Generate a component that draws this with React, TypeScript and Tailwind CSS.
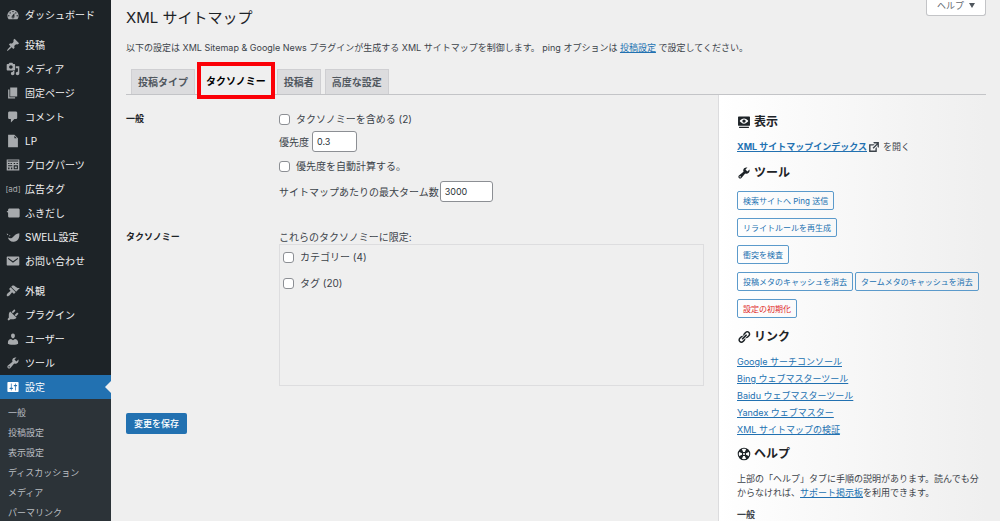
import type { ReactNode } from 'react';

const paths = {
  dashboard:
    'M3.76 16h12.48c1.1-1.37 1.76-3.11 1.76-5 0-4.42-3.58-8-8-8s-8 3.58-8 8c0 1.89.66 3.63 1.76 5zM10 4c.55 0 1 .45 1 1s-.45 1-1 1-1-.45-1-1 .45-1 1-1zM6 6c.55 0 1 .45 1 1s-.45 1-1 1-1-.45-1-1 .45-1 1-1zm8 0c.55 0 1 .45 1 1s-.45 1-1 1-1-.45-1-1 .45-1 1-1zm-5.37 5.55L12 7v6c0 1.1-.9 2-2 2s-2-.9-2-2c0-.57.24-1.08.63-1.45zM4 10c.55 0 1 .45 1 1s-.45 1-1 1-1-.45-1-1 .45-1 1-1zm12 0c.55 0 1 .45 1 1s-.45 1-1 1-1-.45-1-1 .45-1 1-1zm-5 3c0-.55-.45-1-1-1s-1 .45-1 1 .45 1 1 1 1-.45 1-1z',
  post: 'M10.44 3.02l1.82-1.82 6.36 6.35-1.83 1.82c-1.05-.68-2.48-.57-3.41.36l-.75.75c-.92.93-1.04 2.35-.35 3.41l-1.83 1.82-2.41-2.41-2.8 2.79c-.42.42-3.38 2.71-3.8 2.29s1.86-3.39 2.28-3.81l2.79-2.79L4.1 9.36l1.83-1.82c1.05.69 2.48.57 3.4-.36l.75-.75c.93-.92 1.05-2.35.36-3.41z',
  media:
    'M13 11V4c0-.55-.45-1-1-1h-1.67L9 1H5L3.67 3H2c-.55 0-1 .45-1 1v7c0 .55.45 1 1 1h10c.55 0 1-.45 1-1zM7 4.5c1.38 0 2.5 1.12 2.5 2.5S8.38 9.5 7 9.5 4.5 8.38 4.5 7 5.62 4.5 7 4.5zM14 6h5v10.5c0 1.38-1.12 2.5-2.5 2.5S14 17.88 14 16.5s1.12-2.5 2.5-2.5c.17 0 .34.02.5.05V9h-3V6zm-4 8.05V13h2v3.5c0 1.38-1.12 2.5-2.5 2.5S7 17.88 7 16.5 8.12 14 9.5 14c.17 0 .34.02.5.05z',
  page: 'M6 15V2h10v13H6zm-1 1h8v2H3V5h2v11z',
  comment:
    'M5 2h9c1.1 0 2 .9 2 2v7c0 1.1-.9 2-2 2h-2l-5 5v-5H5c-1.1 0-2-.9-2-2V4c0-1.1.9-2 2-2z',
  document: 'M3 1h9l5 5v13H3V1zm9 1.500V6h3.500z',
  blocks:
    'M1 2h18v16H1V2zm1.500 1.500v1.500h15V3.500h-15zM3 7v1.500h2V7H3zm3.500 0v1.500h2V7h-2zm4.500 0v1.500h2V7h-2zm4 0v1.500h2V7h-2zM3 10.500v1.300h6v-1.300H3zm8 0V16h6v-5.500h-6zm1.500 1.500h3v2.500h-3V12zM3 13.500V16h2v-2.500H3zm4 0V16h2v-2.500H7z',
  balloon:
    'M5 3.500h12.500c1.100 0 2 .9 2 2v9c0 1.100-.9 2-2 2H5c-1.100 0-2-.9-2-2V9.500L.8 7.800 3 6.800V5.500c0-1.100.9-2 2-2z',
  swell:
    'M19 4.500c.8 6.500-2.200 11.800-8 12.300-4.200.3-7.300-2-8.300-6 2.600 1.600 5.600 1.500 7.300-.8C12.500 7 14.500 5 19 4.500zM1 5l2.500 1.200L1.800 7.500zM4.500 7.200l2 1-1.500 1z',
  mail: 'M2 3.500h16c.6 0 1 .4 1 1v11c0 .6-.4 1-1 1H2c-.6 0-1-.4-1-1v-11c0-.6.4-1 1-1zm1 2v1.600l7 5.400 7-5.400V5.500l-7 5z',
  appearance:
    'M14.48 11.06L7.41 3.99l1.5-1.5c.5-.56 2.3-.47 3.51.32 1.21.8 1.43 1.28 2.91 2.1 1.18.64 2.45 1.26 4.45.85zm-.71.71L6.7 4.7 4.93 6.47c-.39.39-.39 1.02 0 1.41l1.06 1.06c.39.39.39 1.03 0 1.42-.6.6-1.43 1.11-2.21 1.69-.35.26-.7.53-1.01.84C1.43 14.23.4 16.08 1.4 17.07c.99 1 2.84-.03 4.18-1.36.31-.31.58-.66.85-1.02.57-.78 1.08-1.61 1.69-2.21.39-.39 1.02-.39 1.41 0l1.06 1.06c.39.39 1.02.39 1.41 0z',
  plugin:
    'M13.11 4.36L9.87 7.6 8 5.73l3.24-3.24c.35-.34 1.05-.2 1.56.32.52.51.66 1.21.31 1.55zm-8 1.77l.91-1.12 9.01 9.01-1.19.84c-.71.71-2.63 1.16-3.82 1.16H6.14L4.9 17.26c-.59.59-1.54.59-2.12 0-.59-.58-.59-1.53 0-2.12l1.24-1.24v-3.88c0-1.13.4-3.19 1.09-3.89zm7.26 3.97l3.24-3.24c.34-.35 1.04-.21 1.55.31.52.51.66 1.21.31 1.55l-3.24 3.25z',
  user: 'M10 9.25c-2.27 0-2.73-3.44-2.73-3.44C7 4.02 7.82 2 9.97 2c2.16 0 2.98 2.02 2.71 3.81 0 0-.41 3.44-2.68 3.44zm0 2.57L12.72 10c2.39 0 4.52 2.33 4.52 4.53v2.49s-3.65 1.13-7.24 1.13c-3.65 0-7.24-1.13-7.24-1.13v-2.49c0-2.25 1.94-4.48 4.47-4.48z',
  tools:
    'M16.68 9.77c-1.34 1.34-3.3 1.67-4.95.99l-5.41 6.52c-.99.99-2.59.99-3.58 0s-.99-2.59 0-3.57l6.52-5.42c-.68-1.65-.35-3.61.99-4.95 1.28-1.28 3.12-1.62 4.72-1.06l-2.89 2.89 2.82 2.82 2.86-2.87c.53 1.58.18 3.39-1.08 4.65zM3.81 16.21c.4.39 1.04.39 1.43 0 .4-.4.4-1.04 0-1.43-.39-.4-1.03-.4-1.43 0-.39.39-.39 1.03 0 1.43z',
  settings:
    'M18 16V4c0-.55-.45-1-1-1H3c-.55 0-1 .45-1 1v12c0 .55.45 1 1 1h14c.55 0 1-.45 1-1zM8 11h1c.55 0 1 .45 1 1s-.45 1-1 1H8v1.500c0 .28-.22.5-.5.5s-.5-.22-.5-.5V13H6c-.55 0-1-.45-1-1s.45-1 1-1h1V5.500c0-.28.22-.5.5-.5s.5.22.5.5V11zm5-2h-1c-.55 0-1-.45-1-1s.45-1 1-1h1V5.500c0-.28.22-.5.5-.5s.5.22.5.5V7h1c.55 0 1 .45 1 1s-.45 1-1 1h-1v5.500c0 .28-.22.5-.5.5s-.5-.22-.5-.5V9z',
  view: 'M18.500 14.500V3c0-.55-.45-1-1-1h-15c-.55 0-1 .45-1 1v11.500c0 .55.45 1 1 1h15c.55 0 1-.45 1-1zM10 5c2.500 0 4.700 1.500 6.200 3.700-1.500 2.200-3.700 3.700-6.200 3.700s-4.700-1.500-6.200-3.700C5.300 6.500 7.500 5 10 5zm2.400 3.700a2.400 2.400 0 1 0-4.800 0 2.400 2.400 0 0 0 4.800 0zM3 16.800h14v1.700H3z',
  external: 'M9 3h8v8l-2-1V6.92l-5.6 5.59-1.41-1.41L14.08 5H10zm3 12v-3l2-2v7H3V6h8L9 8H5v7h7z',
  link: 'M17.74 2.76c1.68 1.69 1.68 4.41 0 6.1l-1.53 1.52c-1.12 1.12-2.7 1.47-4.14 1.09l2.62-2.61.76-.77.76-.76c.84-.84.84-2.2 0-3.04-.84-.85-2.2-.85-3.04 0l-.77.76-3.38 3.38c-.37-1.44-.02-3.02 1.1-4.14l1.52-1.53c1.69-1.68 4.42-1.68 6.1 0zM8.59 13.43l5.34-5.34c.42-.42.42-1.1 0-1.52-.44-.43-1.13-.39-1.53 0l-5.33 5.34c-.42.42-.42 1.1 0 1.52.44.43 1.13.39 1.52 0zm-.76 2.29l4.14-4.15c.38 1.44.03 3.02-1.09 4.14l-1.52 1.53c-1.69 1.68-4.41 1.68-6.1 0-1.68-1.68-1.68-4.42 0-6.1l1.53-1.52c1.12-1.12 2.7-1.47 4.14-1.1l-4.14 4.15c-.85.84-.85 2.2 0 3.05.84.84 2.2.84 3.04 0z',
  // Life ring: outer disc, four diagonal spokes around a solid core.
  help: 'M10 1a9 9 0 1 0 0 18 9 9 0 0 0 0-18zM7 3.200c1.900-.8 4.100-.8 6 0l-1.800 3.900h-2.400zM7 16.800c1.900.8 4.100.8 6 0l-1.800-3.900h-2.400zM3.200 7c-.8 1.900-.8 4.100 0 6l3.900-1.800v-2.400zM16.800 7c.8 1.900.8 4.100 0 6l-3.900-1.800v-2.400zM10 8.500a1.500 1.500 0 1 0 0 3 1.500 1.500 0 0 0 0-3z',
};

type IconName = keyof typeof paths;

function Icon({ name }: { name: IconName }) {
  return (
    <svg viewBox="0 0 20 20" className="size-3.5 shrink-0" fill="currentColor" fillRule="evenodd" aria-hidden="true">
      <path d={paths[name]} />
    </svg>
  );
}

type MenuEntry = { label: string; icon: IconName | 'ad' };

const menuGroups: MenuEntry[][] = [
  [{ label: 'ダッシュボード', icon: 'dashboard' }],
  [
    { label: '投稿', icon: 'post' },
    { label: 'メディア', icon: 'media' },
    { label: '固定ページ', icon: 'page' },
    { label: 'コメント', icon: 'comment' },
    { label: 'LP', icon: 'document' },
    { label: 'ブログパーツ', icon: 'blocks' },
    { label: '広告タグ', icon: 'ad' },
    { label: 'ふきだし', icon: 'balloon' },
    { label: 'SWELL設定', icon: 'swell' },
    { label: 'お問い合わせ', icon: 'mail' },
  ],
  [
    { label: '外観', icon: 'appearance' },
    { label: 'プラグイン', icon: 'plugin' },
    { label: 'ユーザー', icon: 'user' },
    { label: 'ツール', icon: 'tools' },
    { label: '設定', icon: 'settings' },
  ],
];

const submenu = ['一般', '投稿設定', '表示設定', 'ディスカッション', 'メディア', 'パーマリンク'];

function AdminMenu() {
  return (
    <nav className="w-[111px] shrink-0 bg-[#1d2327] pt-[3px] text-[10px] text-[#f0f0f1]">
      <div className="flex flex-col gap-1.5">
        {menuGroups.map((group) => (
          <ul key={group[0].label}>
            {group.map(({ label, icon }) => {
              const current = label === '設定';
              return (
                <li key={label}>
                  <a
                    href="#"
                    className={`relative flex h-6 items-center gap-[5px] pl-[6px] whitespace-nowrap ${current ? 'bg-[#2271b1] text-white' : ''}`}
                  >
                    <span className={`flex w-3.5 justify-center ${current ? 'text-white' : 'text-[#a7aaad]'}`}>
                      {icon === 'ad' ? <span className="text-[8px]">[ad]</span> : <Icon name={icon} />}
                    </span>
                    {label}
                    {current && (
                      <span className="absolute top-1/2 right-0 -translate-y-1/2 border-y-[6px] border-r-[6px] border-y-transparent border-r-[#efefef]" />
                    )}
                  </a>
                </li>
              );
            })}
          </ul>
        ))}
      </div>
      <ul className="h-full bg-[#2c3338] pt-1 text-[9px] text-[#b9bdc1]">
        {submenu.map((label) => (
          <li key={label}>
            <a href="#" className="flex h-5 items-center pl-2 whitespace-nowrap">
              {label}
            </a>
          </li>
        ))}
      </ul>
    </nav>
  );
}

function Check({ id, label }: { id: string; label: string }) {
  return (
    <div className="flex items-center gap-1.5">
      <input
        id={id}
        type="checkbox"
        className="size-[11px] shrink-0 appearance-none rounded-[3px] border border-[#8c8f94] bg-white checked:bg-[#2271b1]"
      />
      <label htmlFor={id}>{label}</label>
    </div>
  );
}

function SideHeading({ icon, children }: { icon: IconName; children: ReactNode }) {
  return (
    <h2 className="flex h-5 items-center gap-[3px] text-[12px] font-bold text-[#1d2327]">
      <Icon name={icon} />
      {children}
    </h2>
  );
}

function SideButton({ children, danger }: { children: ReactNode; danger?: boolean }) {
  return (
    <button
      type="button"
      className={`flex h-[19px] items-center rounded-[2px] border border-[#5b9acb] px-[5px] text-[8px] whitespace-nowrap ${danger ? 'text-[#e02b2b]' : 'text-[#2271b1]'}`}
    >
      {children}
    </button>
  );
}

const tabs = ['投稿タイプ', 'タクソノミー', '投稿者', '高度な設定'];
const links = [
  'Google サーチコンソール',
  'Bing ウェブマスターツール',
  'Baidu ウェブマスターツール',
  'Yandex ウェブマスター',
  'XML サイトマップの検証',
];

export default function App() {
  return (
    <div className="flex h-screen overflow-hidden bg-[#efefef] font-['Inter','Noto_Sans_CJK_JP',sans-serif] text-[9px] leading-[14px] text-[#3c434a]">
      <AdminMenu />
      <main className="min-w-0 flex-1 pr-3.5 pl-[15px]">
        <header className="flex items-start justify-between">
          <h1 className="pt-2 text-[15px] leading-5 text-[#1d2327]">XML サイトマップ</h1>
          <button
            type="button"
            className="flex h-4 items-center gap-[5px] rounded-b-[3px] border border-t-0 border-[#c3c4c7] bg-white px-2.5 pb-1 text-[#646970]"
          >
            ヘルプ <span className="border-x-[3px] border-t-[5px] border-x-transparent border-t-[#50575e]" />
          </button>
        </header>
        <p className="pt-[13px]">
          以下の設定は XML Sitemap &amp; Google News プラグインが生成する XML サイトマップを制御します。 ping オプションは{' '}
          <a href="#" className="text-[#2271b1] underline">
            投稿設定
          </a>{' '}
          で設定してください。
        </p>

        <nav className="mt-3.5 flex h-[26px] items-end gap-1 border-b border-[#c3c4c7] pl-[5px]">
          {tabs.map((tab) =>
            tab === 'タクソノミー' ? (
              <a
                key={tab}
                href="#"
                className="relative z-10 -mx-0.5 -mb-[5px] flex h-[37px] items-center border-4 border-[#fb0007] bg-[#efefef] px-[5px] text-[10px] font-bold text-black"
              >
                {tab}
              </a>
            ) : (
              <a
                key={tab}
                href="#"
                className="flex h-[25px] items-center border border-b-0 border-[#cfcfd2] bg-[#dcdcde] px-1.5 text-[10px] font-bold text-[#50575e]"
              >
                {tab}
              </a>
            ),
          )}
        </nav>

        <div className="flex">
          <form className="min-w-0 flex-1 pr-3.5 text-[10px]" onSubmit={(e) => e.preventDefault()}>
            <div className="flex pt-[17px]">
              <h2 className="w-[153px] shrink-0 text-[9px] font-bold text-[#1d2327]">一般</h2>
              <div>
                <Check id="include" label="タクソノミーを含める (2)" />
                <div className="flex items-center gap-[3px] pt-[5px]">
                  <label htmlFor="priority">優先度</label>
                  <input
                    id="priority"
                    defaultValue="0.3"
                    className="h-[21px] w-[45px] rounded-[3px] border border-[#8c8f94] bg-white px-1 text-[9px] text-[#2c3338]"
                  />
                </div>
                <div className="pt-[7px]">
                  <Check id="auto" label="優先度を自動計算する。" />
                </div>
                <div className="flex items-center gap-px pt-2">
                  <label htmlFor="max">サイトマップあたりの最大ターム数</label>
                  <input
                    id="max"
                    defaultValue="3000"
                    className="h-[21px] w-[53px] rounded-[3px] border border-[#8c8f94] bg-white px-1 text-[9px] text-[#2c3338]"
                  />
                </div>
              </div>
            </div>
            <div className="flex pt-7">
              <h2 className="w-[153px] shrink-0 text-[9px] font-bold text-[#1d2327]">タクソノミー</h2>
              <div className="min-w-0 flex-1">
                <p>これらのタクソノミーに限定:</p>
                <div className="flex h-[142px] flex-col gap-3 border border-[#dddddf] px-[3px] pt-[5px]">
                  <Check id="category" label="カテゴリー (4)" />
                  <Check id="tag" label="タグ (20)" />
                </div>
              </div>
            </div>
            <button
              type="submit"
              className="mt-[27px] flex h-[21px] items-center rounded-[2px] bg-[#2271b1] px-2 text-[9px] font-medium text-white"
            >
              変更を保存
            </button>
          </form>

          <aside className="h-screen w-[268px] shrink-0 border-l border-[#dcdcde] bg-linear-to-r from-white to-[#efefef] pt-[17px] pl-[18px]">
            <SideHeading icon="view">表示</SideHeading>
            <p className="flex items-center pt-2">
              <a href="#" className="font-bold text-[#2271b1] underline">
                XML サイトマップインデックス
              </a>
              <Icon name="external" />
              <span className="pl-0.5">を開く</span>
            </p>
            <div className="pt-[9px]">
              <SideHeading icon="tools">ツール</SideHeading>
            </div>
            <div className="flex flex-col items-start gap-2 pt-2">
              <SideButton>検索サイトへ Ping 送信</SideButton>
              <SideButton>リライトルールを再生成</SideButton>
              <SideButton>衝突を検査</SideButton>
              <div className="flex gap-0.5">
                <SideButton>投稿メタのキャッシュを消去</SideButton>
                <SideButton>タームメタのキャッシュを消去</SideButton>
              </div>
              <SideButton danger>設定の初期化</SideButton>
            </div>
            <div className="pt-[9px]">
              <SideHeading icon="link">リンク</SideHeading>
            </div>
            <ul className="pt-1.5 leading-[17px]">
              {links.map((label) => (
                <li key={label}>
                  <a href="#" className="text-[#2271b1] underline">
                    {label}
                  </a>
                </li>
              ))}
            </ul>
            <div className="pt-1.5">
              <SideHeading icon="help">ヘルプ</SideHeading>
            </div>
            <p className="pt-2">
              上部の「ヘルプ」タブに手順の説明があります。読んでも分からなければ、
              <a href="#" className="text-[#2271b1] underline">
                サポート掲示板
              </a>
              を利用できます。
            </p>
            <h3 className="pt-2 font-bold">一般</h3>
          </aside>
        </div>
      </main>
    </div>
  );
}
